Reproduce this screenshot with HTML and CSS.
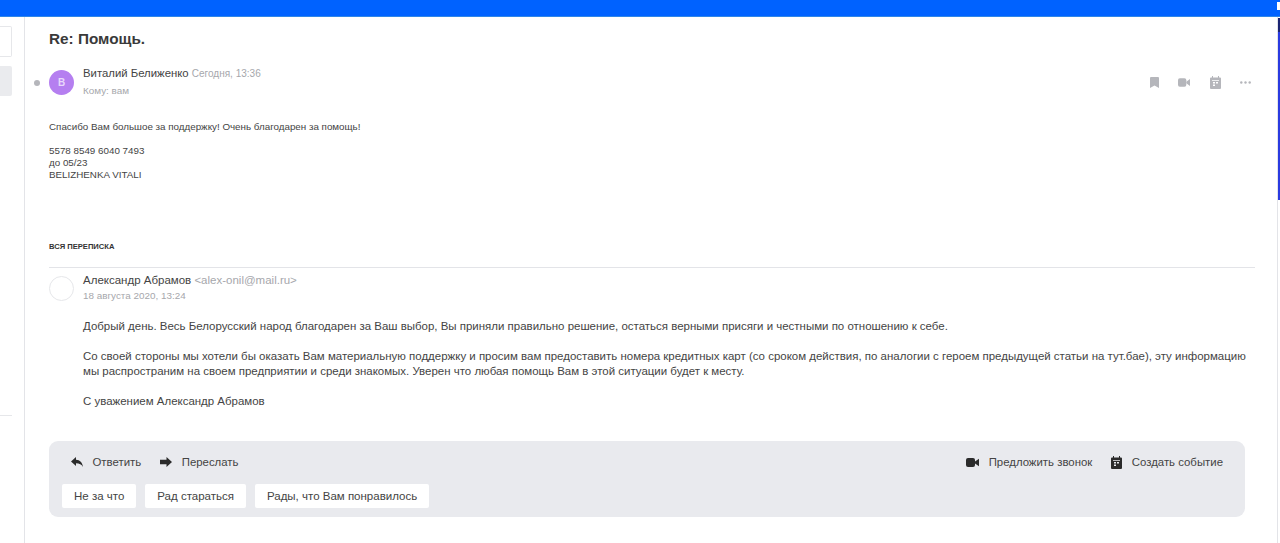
FILE: index.html
```html
<!DOCTYPE html>
<html lang="ru">
<head>
    <meta charset="UTF-8">
    <meta name="viewport" content="width=device-width, initial-scale=1.0">
    <title>Re: Помощь.</title>
    <link rel="stylesheet" href="styles.css">
</head>
<body>

<div class="topbar">
    <div class="topbar-notch"></div>
</div>

<div class="layout">
    <div class="sidebar">
        <div class="side-input"></div>
        <div class="side-item"></div>
        <div class="side-line"></div>
    </div>

    <div class="main">
        <h1 class="subject">Re: Помощь.</h1>

        <div class="letter-head">
            <span class="dot"></span>
            <div class="avatar">В</div>
            <div class="head-text">
                <div class="from">Виталий Белиженко <span class="when">Сегодня, 13:36</span></div>
                <div class="to">Кому: вам</div>
            </div>
            <div class="head-icons">
                <svg class="tool tool-mark" viewBox="0 0 9 11"><path d="M0 1a1 1 0 0 1 1-1h7a1 1 0 0 1 1 1v10L4.500 8.400 0 11z"/></svg>
                <svg class="tool tool-video" viewBox="0 0 13 9"><rect x="0" y="0" width="9" height="9" rx="2"/><path d="M9 3.600 13 .8v7.400L9 5.400z"/></svg>
                <svg class="tool tool-cal" viewBox="0 0 11 13"><path fill-rule="evenodd" d="M2 0h1v1.500h5V0h1v1.500h1a1 1 0 0 1 1 1V12a1 1 0 0 1-1 1H1a1 1 0 0 1-1-1V2.500a1 1 0 0 1 1-1h1zM2 4v.8h7V4zm1 2v1.500h2V6zm3 0v1.500h2V6zM3 8.500V10h2V8.500z"/></svg>
                <svg class="tool tool-more" viewBox="0 0 11 3"><circle cx="1.300" cy="1.500" r="1.200"/><circle cx="5.500" cy="1.500" r="1.200"/><circle cx="9.700" cy="1.500" r="1.200"/></svg>
            </div>
        </div>

        <div class="letter-body">
            <p>Спасибо Вам большое за поддержку! Очень благодарен за помощь!</p>
            <p>5578 8549 6040 7493<br>до 05/23<br>BELIZHENKA VITALI</p>
        </div>

        <div class="thread-title">ВСЯ ПЕРЕПИСКА</div>

        <div class="thread-letter">
            <div class="avatar avatar-empty"></div>
            <div class="thread-content">
                <div class="thread-from">Александр Абрамов <span class="muted">&lt;alex-onil@mail.ru&gt;</span></div>
                <div class="thread-date">18 августа 2020, 13:24</div>
                <div class="thread-body">
                    <p>Добрый день. Весь Белорусский народ благодарен за Ваш выбор, Вы приняли правильно решение, остаться верными присяги и честными по отношению к себе.</p>
                    <p>Со своей стороны мы хотели бы оказать Вам материальную поддержку и просим вам предоставить номера кредитных карт (со сроком действия, по аналогии с героем предыдущей статьи на тут.бае), эту информацию мы распространим на своем предприятии и среди знакомых. Уверен что любая помощь Вам в этой ситуации будет к месту.</p>
                    <p>С уважением Александр Абрамов</p>
                </div>
            </div>
        </div>

        <div class="reply-box">
            <div class="reply-actions">
                <div class="action-group">
                    <a class="action">
                        <svg class="action-icon" viewBox="0 0 12 10"><path d="M5 0v2.700c4 .2 6.400 2.600 7 7.300-1.500-2.700-3.500-3.800-7-3.800V9L0 4.500z"/></svg>
                        Ответить
                    </a>
                    <a class="action">
                        <svg class="action-icon" viewBox="0 0 12 10"><path d="M6.500 0 12 5l-5.500 5V7.200H0V2.800h6.500z"/></svg>
                        Переслать
                    </a>
                </div>
                <div class="action-group">
                    <a class="action">
                        <svg class="action-icon action-icon-video" viewBox="0 0 13 9"><rect x="0" y="0" width="9" height="9" rx="2"/><path d="M9 3.600 13 .8v7.400L9 5.400z"/></svg>
                        Предложить звонок
                    </a>
                    <a class="action">
                        <svg class="action-icon action-icon-cal" viewBox="0 0 11 13"><path fill-rule="evenodd" d="M2 0h1v1.500h5V0h1v1.500h1a1 1 0 0 1 1 1V12a1 1 0 0 1-1 1H1a1 1 0 0 1-1-1V2.500a1 1 0 0 1 1-1h1zM2 4v.8h7V4zm1 2v1.500h2V6zm3 0v1.500h2V6zM3 8.500V10h2V8.500z"/></svg>
                        Создать событие
                    </a>
                </div>
            </div>
            <div class="quick-replies">
                <button class="quick">Не за что</button>
                <button class="quick">Рад стараться</button>
                <button class="quick">Рады, что Вам понравилось</button>
            </div>
        </div>
    </div>

    <div class="scroll">
        <div class="scroll-thumb"></div>
    </div>
</div>

</body>
</html>
```
FILE: styles.css
```css
html, body {
    margin: 0;
    height: 543px;
    overflow: hidden;
    background: #fff;
    font-family: "Liberation Sans", Arial, sans-serif;
    color: #444;
}
p {
    margin: 0;
}
.topbar {
    display: flex;
    justify-content: flex-end;
    height: 17px;
    background: #0062ff;
    border-bottom: 1px solid #2f86e8;
    box-sizing: border-box;
}
.topbar-notch {
    width: 3px;
    height: 8px;
    margin-top: 2px;
    background: #fff;
}
.layout {
    display: flex;
    height: 526px;
}

/* left column, cut off by the crop */
.sidebar {
    width: 24px;
    flex: none;
    border-right: 1px solid #e3e4e8;
    padding-top: 9px;
}
.side-input {
    width: 11px;
    height: 29px;
    border: 1px solid #e6e7ea;
    border-left: 0;
    border-radius: 0 2px 2px 0;
}
.side-item {
    width: 12px;
    height: 30px;
    margin-top: 9px;
    background: #eaebee;
    border-radius: 0 2px 2px 0;
}
.side-line {
    width: 12px;
    height: 1px;
    margin-top: 319px;
    background: #e6e7ea;
}

.main {
    flex: 1;
    min-width: 0;
    padding: 0 22px 0 24px;
}
.subject {
    margin: 13px 0 0;
    font-size: 15.300px;
    line-height: 17px;
    font-weight: bold;
    color: #3a3a3a;
}

.letter-head {
    display: flex;
    align-items: center;
    margin-top: 23px;
    height: 25px;
}
.dot {
    width: 6px;
    height: 6px;
    margin-left: -15px;
    margin-right: 9px;
    border-radius: 50%;
    background: #b5b6bb;
}
.avatar {
    width: 25px;
    height: 25px;
    flex: none;
    border-radius: 50%;
    background: #b57ff0;
    color: #e8d8fb;
    font-size: 10px;
    font-weight: bold;
    line-height: 25px;
    text-align: center;
}
.avatar-empty {
    background: #fff;
    box-sizing: border-box;
    border: 1px solid #e6e7ea;
}
.head-text {
    margin-left: 9px;
    flex: 1;
}
.from {
    font-size: 11.350px;
    line-height: 14px;
    margin-top: -2px;
}
.when {
    font-size: 10px;
    color: #a6a7ac;
}
.muted {
    color: #a6a7ac;
}
.to {
    font-size: 9.900px;
    line-height: 12px;
    margin-top: 4px;
    color: #a6a7ac;
}
.head-icons {
    display: flex;
    align-items: center;
    gap: 19.500px;
    margin-right: 4px;
}
.tool {
    display: block;
    fill: #b5b6bb;
}
.tool-mark {
    width: 9px;
    height: 11px;
}
.tool-video {
    width: 12px;
    height: 9px;
}
.tool-cal {
    width: 11px;
    height: 13px;
}
.tool-more {
    width: 11px;
    height: 3px;
}

.letter-body {
    margin-top: 26px;
    font-size: 9.800px;
    line-height: 12px;
}
.letter-body p + p {
    margin-top: 12px;
}

.thread-title {
    margin-top: 62px;
    font-size: 7.600px;
    line-height: 8px;
    font-weight: bold;
    color: #333;
    padding-bottom: 16px;
    border-bottom: 1px solid #e3e4e8;
}
.thread-letter {
    display: flex;
    margin-top: 8px;
    gap: 9px;
}
.thread-content {
    flex: 1;
    min-width: 0;
}
.thread-from {
    font-size: 11.500px;
    line-height: 12px;
    margin-top: -2px;
}
.thread-date {
    margin-top: 4px;
    font-size: 9.900px;
    line-height: 12px;
    color: #a6a7ac;
}
.thread-body {
    margin-top: 17px;
    font-size: 11.480px;
    line-height: 15px;
}
.thread-body p + p {
    margin-top: 15px;
}

.reply-box {
    margin: 32px 10px 0 0;
    height: 76px;
    box-sizing: border-box;
    padding: 12px 13px 0;
    background: #e9eaee;
    border-radius: 9px;
}
.reply-actions {
    display: flex;
    justify-content: space-between;
    padding: 0 9px;
}
.action-group {
    display: flex;
    gap: 19px;
}
.action {
    display: flex;
    align-items: center;
    gap: 9.500px;
    font-size: 11.400px;
    line-height: 18px;
}
.action-icon {
    display: block;
    width: 12px;
    height: 10px;
    fill: #2b2b2b;
}
.action-icon-video {
    width: 13px;
    height: 9px;
}
.action-icon-cal {
    width: 11px;
    height: 13px;
}
.quick-replies {
    display: flex;
    gap: 9px;
    margin-top: 13px;
}
.quick {
    height: 24px;
    padding: 0 12px;
    border: 0;
    border-radius: 2px;
    background: #fff;
    font-family: inherit;
    font-size: 11.500px;
    color: #444;
}

.scroll {
    width: 3px;
    flex: none;
    border-left: 1px solid #e3e4e8;
    box-sizing: border-box;
}
.scroll-thumb {
    height: 182px;
    margin-top: 1px;
    background: #2a3be0;
    border-top: 14px solid #1b2472;
    box-sizing: border-box;
}
```
